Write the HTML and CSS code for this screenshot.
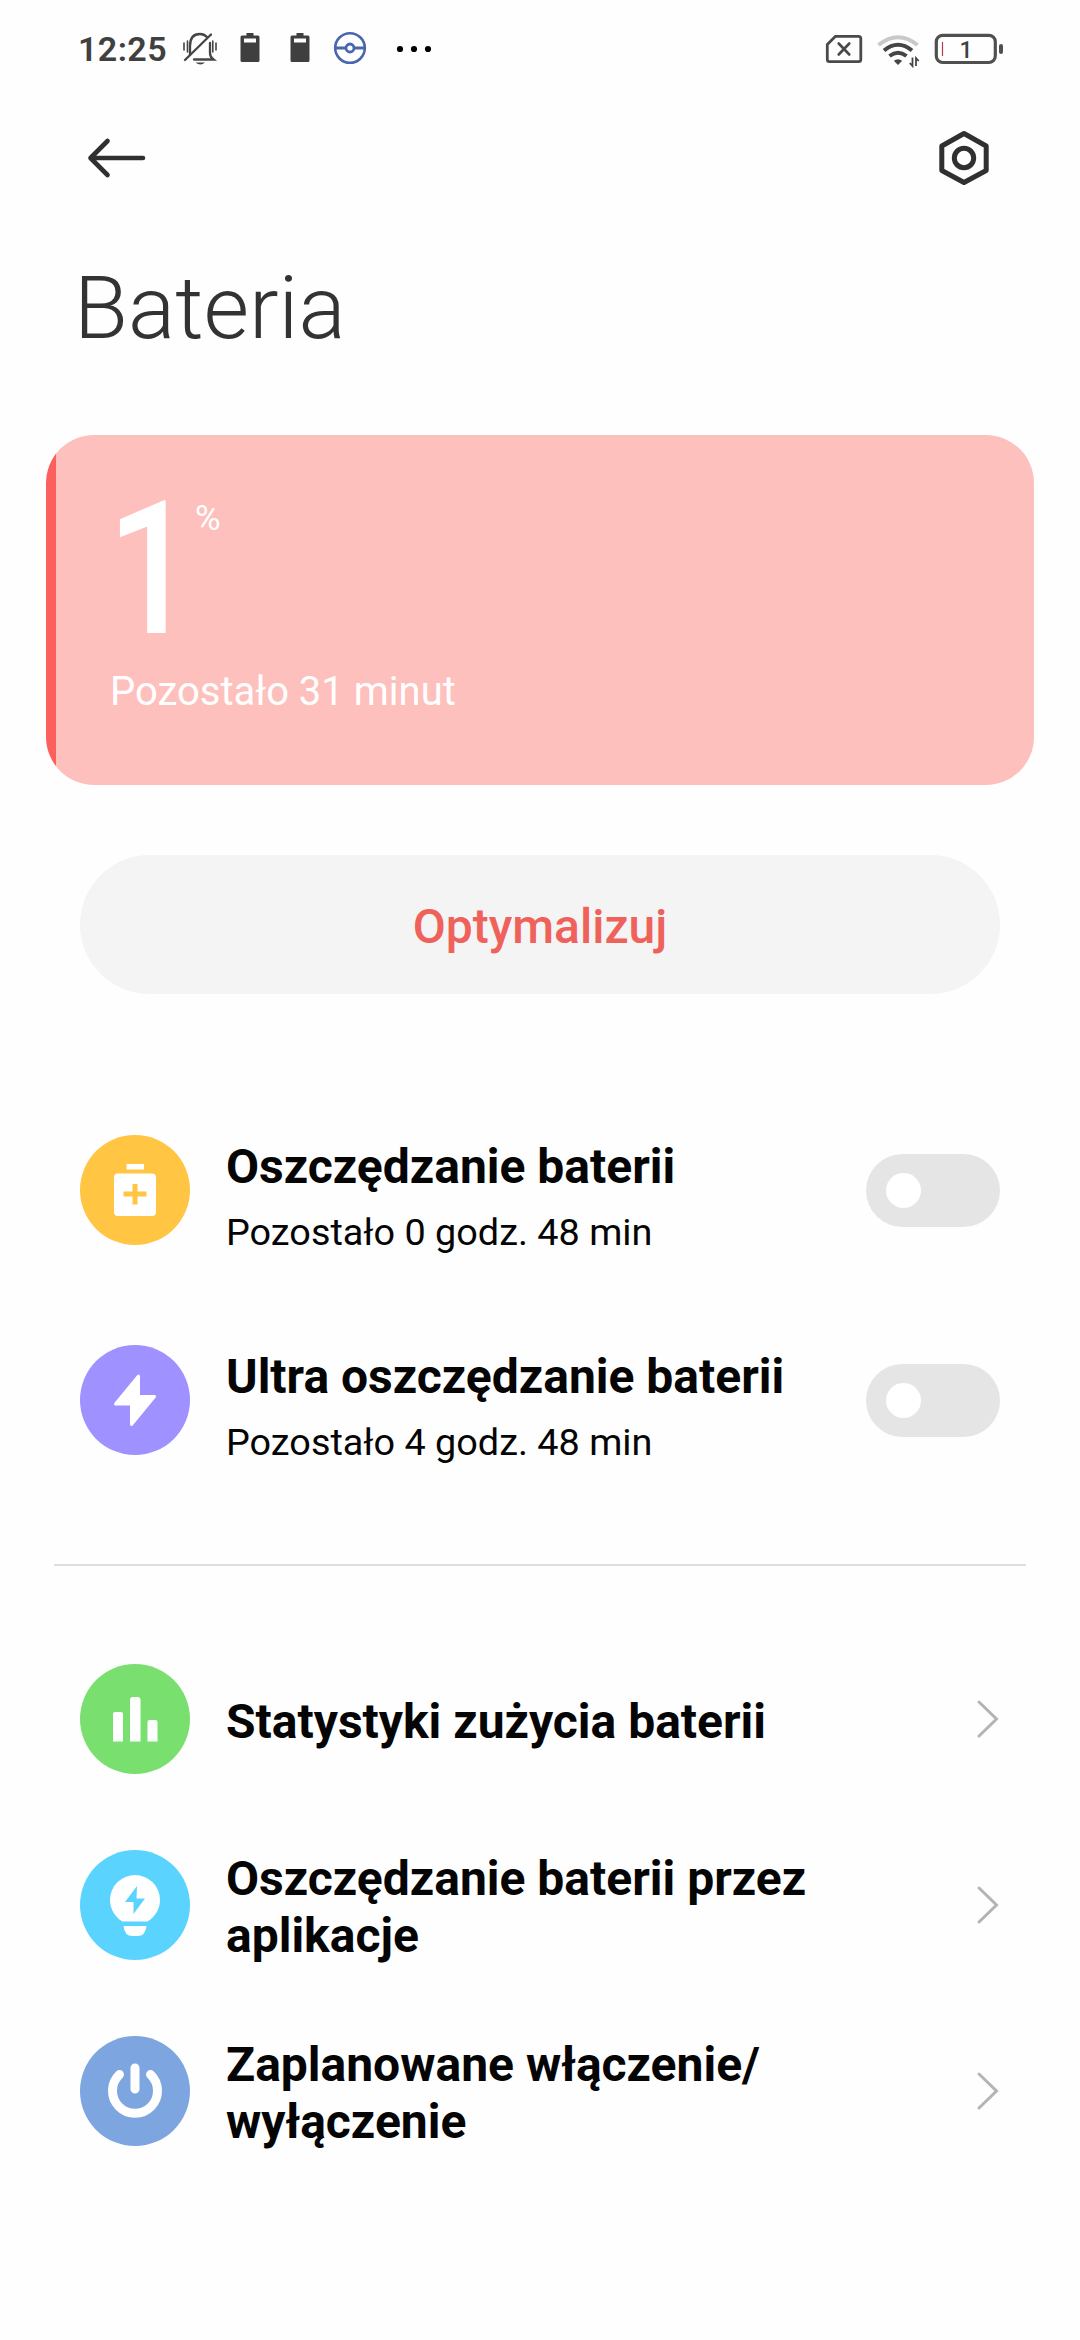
FILE: index.html
```html
<!DOCTYPE html>
<html lang="pl">
<head>
<meta charset="utf-8">
<title>Bateria</title>
<link rel="stylesheet" href="styles.css">
</head>
<body>
<div class="status">
  <div class="status-left">
    <span class="clock">12:25</span>
    <svg class="ic-bell" width="40" height="40" viewBox="180 29 40 40" fill="none" stroke="#454545" stroke-width="2.3" stroke-linecap="round">
      <path d="M190 55V46Q190 34 200 34Q204 34 207 37M210 43V53Q210 57 213.500 59.500H194"/>
      <path d="M185 60L211 34.500"/>
      <path d="M184 43V50M187.500 41V52M212.800 41V52M216 43V50" stroke-width="1.600"/>
      <path d="M195.500 62.500H205Q200.500 66.500 195.500 62.500Z" fill="#454545" stroke="none"/>
    </svg>
    <svg class="ic-cell" width="20" height="30" viewBox="0 0 20 30"><path fill="#3f3f3f" fill-rule="evenodd" d="M6.500 0H13.500V2.500H18Q19.500 2.500 19.500 4V27.500Q19.500 29 18 29H2Q.5 29 .5 27.500V4Q.5 2.500 2 2.500H6.500ZM4 5.500V9.500H16V5.500Z"/></svg>
    <svg class="ic-cell ic-cell-second" width="20" height="30" viewBox="0 0 20 30"><path fill="#3f3f3f" fill-rule="evenodd" d="M6.500 0H13.500V2.500H18Q19.500 2.500 19.500 4V27.500Q19.500 29 18 29H2Q.5 29 .5 27.500V4Q.5 2.500 2 2.500H6.500ZM4 5.500V9.500H16V5.500Z"/></svg>
    <svg class="ic-ball" width="34" height="34" viewBox="0 0 34 34" fill="none" stroke="#4a66ad"><circle cx="17" cy="17" r="14.800" stroke-width="2.600"/><circle cx="17" cy="17" r="4" stroke-width="2.800"/><path d="M2 17H13M21 17H32" stroke-width="2.800"/></svg>
    <svg class="ic-dots" width="36" height="8" viewBox="0 0 36 8"><circle cx="4" cy="4" r="3.100"/><circle cx="18" cy="4" r="3.100"/><circle cx="32" cy="4" r="3.100"/></svg>
  </div>
  <div class="status-right">
    <svg width="38" height="30" viewBox="825 34 38 30" fill="none" stroke="#4a4a4a"><path d="M835.500 36.300H858.500Q860.800 36.300 860.800 38.500V59.500Q860.800 61.700 858.500 61.700H829.500Q827.300 61.700 827.300 59.500V44.500Z" stroke-width="2.800" stroke-linejoin="round"/><path d="M838.700 43.500L849.300 54.500M849.300 43.500L838.700 54.500" stroke-width="2.600" stroke-linecap="round"/></svg>
    <svg class="ic-wifi" width="44" height="36" viewBox="876 32 44 36" fill="none" stroke="#454545"><path d="M878.500 45Q898 29.500 917.500 45" stroke="#c9c9c9" stroke-width="4"/><path d="M884 50.500Q898 39 912 50.500M889.500 56Q898 49.500 906.500 56" stroke-width="4"/><path d="M898 65L893.800 60.800Q898 57.500 902.200 60.800Z" fill="#454545" stroke="none"/><path d="M912.500 57.500V66L909.800 63M916 66V58L918.700 61" stroke-width="1.800"/></svg>
    <svg class="ic-power" width="70" height="32" viewBox="934 33 70 32"><rect x="936.300" y="35.300" width="59" height="27.200" rx="6.500" fill="none" stroke="#505050" stroke-width="3.200"/><rect x="999" y="44" width="4" height="10" rx="2" fill="#505050"/><path d="M942.500 42V56" stroke="#b2404c" stroke-width="1.200"/><text class="power-text" x="966" y="58" text-anchor="middle">1</text></svg>
  </div>
</div>
<header class="bar">
  <svg width="60" height="42" viewBox="0 0 60 42" fill="none" stroke="#303030" stroke-width="4.600" stroke-linecap="round" stroke-linejoin="round"><path d="M57 21H4.500M21.500 4L4.500 21L21.500 38"/></svg>
  <svg width="54" height="58" viewBox="0 0 54 58" fill="none" stroke="#303030" stroke-width="5" stroke-linejoin="round"><path d="M27 4.500L49.200 17V41.500L27 53.500L4.800 41.500V17Z"/><circle cx="27" cy="29" r="9.700"/></svg>
</header>
<h1 class="title">Bateria</h1>
<section class="card">
  <div class="level"><span class="level-num">1</span><span class="level-unit">%</span></div>
  <p class="remain">Pozostało 31 minut</p>
</section>
<button class="optimize">Optymalizuj</button>
<section class="modes">
  <div class="row">
    <span class="badge yellow"><svg width="110" height="110" viewBox="0 0 110 110"><rect x="46.500" y="29" width="17.500" height="5.500" fill="#fff"/><path fill="#fff" fill-rule="evenodd" d="M38 38.500H72Q76 38.500 76 42.500V77Q76 81 72 81H38Q34 81 34 77V42.500Q34 38.500 38 38.500ZM52.500 49V56.500H43.500V61.500H52.500V69.500H57.500V61.500H66.500V56.500H57.500V49Z"/></svg></span>
    <div class="text"><h2>Oszczędzanie baterii</h2><p>Pozostało 0 godz. 48 min</p></div>
    <span class="switch"></span>
  </div>
  <div class="row">
    <span class="badge violet"><svg width="110" height="110" viewBox="0 0 110 110"><path d="M58.500 31L35.500 59H51.500V79.500L74.500 51.500H58.500Z" fill="#fff" stroke="#fff" stroke-width="3" stroke-linejoin="round"/></svg></span>
    <div class="text"><h2>Ultra oszczędzanie baterii</h2><p>Pozostało 4 godz. 48 min</p></div>
    <span class="switch"></span>
  </div>
</section>
<hr class="divider">
<section class="links">
  <div class="row">
    <span class="badge green"><svg width="110" height="110" viewBox="0 0 110 110" fill="#fff"><path d="M33 77.500V50Q33 48 35 48H41Q43 48 43 50V77.500ZM50 77.500V36Q50 33 53 33H57.500Q60.500 33 60.500 36V77.500ZM67.500 77.500V58Q67.500 56 69.500 56H75.500Q77.500 56 77.500 58V77.500Z"/></svg></span>
    <h2>Statystyki zużycia baterii</h2>
    <svg class="chev" width="24" height="40" viewBox="0 0 24 40"><path d="M3 3L20.500 20L3 37"/></svg>
  </div>
  <div class="row">
    <span class="badge cyan"><svg width="110" height="110" viewBox="0 0 110 110" fill="#fff"><path fill-rule="evenodd" d="M42.500 71.500C35 67 30 59 30 50A25 25 0 0 1 80 50C80 59 75 67 67.500 71.500ZM57 36L45 52H53.500V64L65 48.500H56.500Z"/><path d="M43.500 76H66.500Q65.500 86 57.500 86H52.500Q44.500 86 43.500 76Z"/></svg></span>
    <h2>Oszczędzanie baterii przez aplikacje</h2>
    <svg class="chev" width="24" height="40" viewBox="0 0 24 40"><path d="M3 3L20.500 20L3 37"/></svg>
  </div>
  <div class="row">
    <span class="badge blue"><svg width="110" height="110" viewBox="0 0 110 110" fill="none" stroke="#fff" stroke-width="9" stroke-linecap="round"><path d="M55 32V53M39.500 38.500A22.500 22.500 0 1 0 70.500 38.500"/></svg></span>
    <h2>Zaplanowane włączenie/<br>wyłączenie</h2>
    <svg class="chev" width="24" height="40" viewBox="0 0 24 40"><path d="M3 3L20.500 20L3 37"/></svg>
  </div>
</section>
</body>
</html>
```
FILE: styles.css
```css
* { box-sizing: border-box; }
body {
  margin: 0;
  width: 1080px;
  height: 2340px;
  overflow: hidden;
  background: #fefefe;
  color: #050505;
  font-family: Roboto, "Noto Sans", sans-serif;
}
h1, h2, p { margin: 0; }
svg { display: block; flex: none; }

.status {
  display: flex;
  justify-content: space-between;
  height: 98px;
  padding: 0 76px 0 78px;
}
.status-left, .status-right { display: flex; align-items: center; }
.clock {
  width: 102px;
  font-size: 34px;
  font-weight: 600;
  letter-spacing: 0.4px;
  line-height: 40px;
  color: #404040;
  white-space: nowrap;
}
.ic-cell { margin: -3px 0 0 20px; }
.ic-cell-second { margin-left: 30px; }
.ic-ball { margin: -2px 0 0 23px; }
.ic-dots { margin-left: 29px; }
.ic-wifi { margin: 2px 0 0 13px; }
.ic-power { margin-left: 14px; }
.power-text { font: 500 23px Roboto, sans-serif; fill: #404040; }

.bar {
  display: flex;
  align-items: center;
  justify-content: space-between;
  height: 120px;
  padding: 0 89px 0 86px;
}
.title {
  height: 217px;
  padding: 38px 0 0 74px;
  font-size: 88px;
  font-weight: 300;
  line-height: 104px;
  color: #333;
}
.card {
  height: 350px;
  margin: 0 46px;
  padding: 54px 0 0 64px;
  border-radius: 48px;
  background: linear-gradient(90deg, #fb605c 10px, #fec0bc 10px);
  color: #fff;
}
.level { display: flex; height: 168px; }
.level-num {
  width: 88px;
  margin-left: -3px;
  font-size: 186px;
  font-weight: 500;
  line-height: 160px;
  transform: scaleX(0.84);
  transform-origin: left;
}
.level-unit { font-size: 35px; line-height: 60px; }
.remain {
  font-size: 40px;
  line-height: 70px;
  white-space: nowrap;
}
.optimize {
  display: block;
  width: 920px;
  height: 139px;
  margin: 70px 80px 0;
  padding: 4px 0 0;
  border: 0;
  border-radius: 70px;
  background: #f4f4f4;
  color: #ef625b;
  font: 500 48px/56px Roboto, sans-serif;
}
.row { display: flex; align-items: center; }
.modes { padding: 91px 80px 0; height: 570px; }
.modes .row { height: 210px; }
.badge { flex: none; width: 110px; height: 110px; border-radius: 50%; }
.yellow { background: #ffc543; }
.violet { background: #9f91ff; }
.green { background: #79e070; }
.cyan { background: #5ad4ff; }
.blue { background: #7da5df; }
.text { flex: 1; padding: 14px 0 0 36px; }
h2 {
  font-size: 48px;
  font-weight: 700;
  line-height: 57px;
  white-space: nowrap;
}
.text p { margin-top: 12px; font-size: 37.8px; line-height: 50px; }
.switch {
  width: 134px;
  height: 73px;
  padding: 19px 20px;
  border-radius: 37px;
  background: #e5e5e5;
}
.switch::before {
  content: "";
  display: block;
  width: 35px;
  height: 35px;
  border-radius: 50%;
  background: #fff;
}
.divider {
  height: 2px;
  margin: 0 54px;
  border: 0;
  background: #dedede;
}
.links { padding: 60px 80px 0; }
.links .row { height: 186px; }
.links h2 { flex: 1; padding: 4px 90px 0 36px; white-space: normal; }
.chev { fill: none; stroke: #b4b4b4; stroke-width: 3; stroke-linecap: round; }
```
